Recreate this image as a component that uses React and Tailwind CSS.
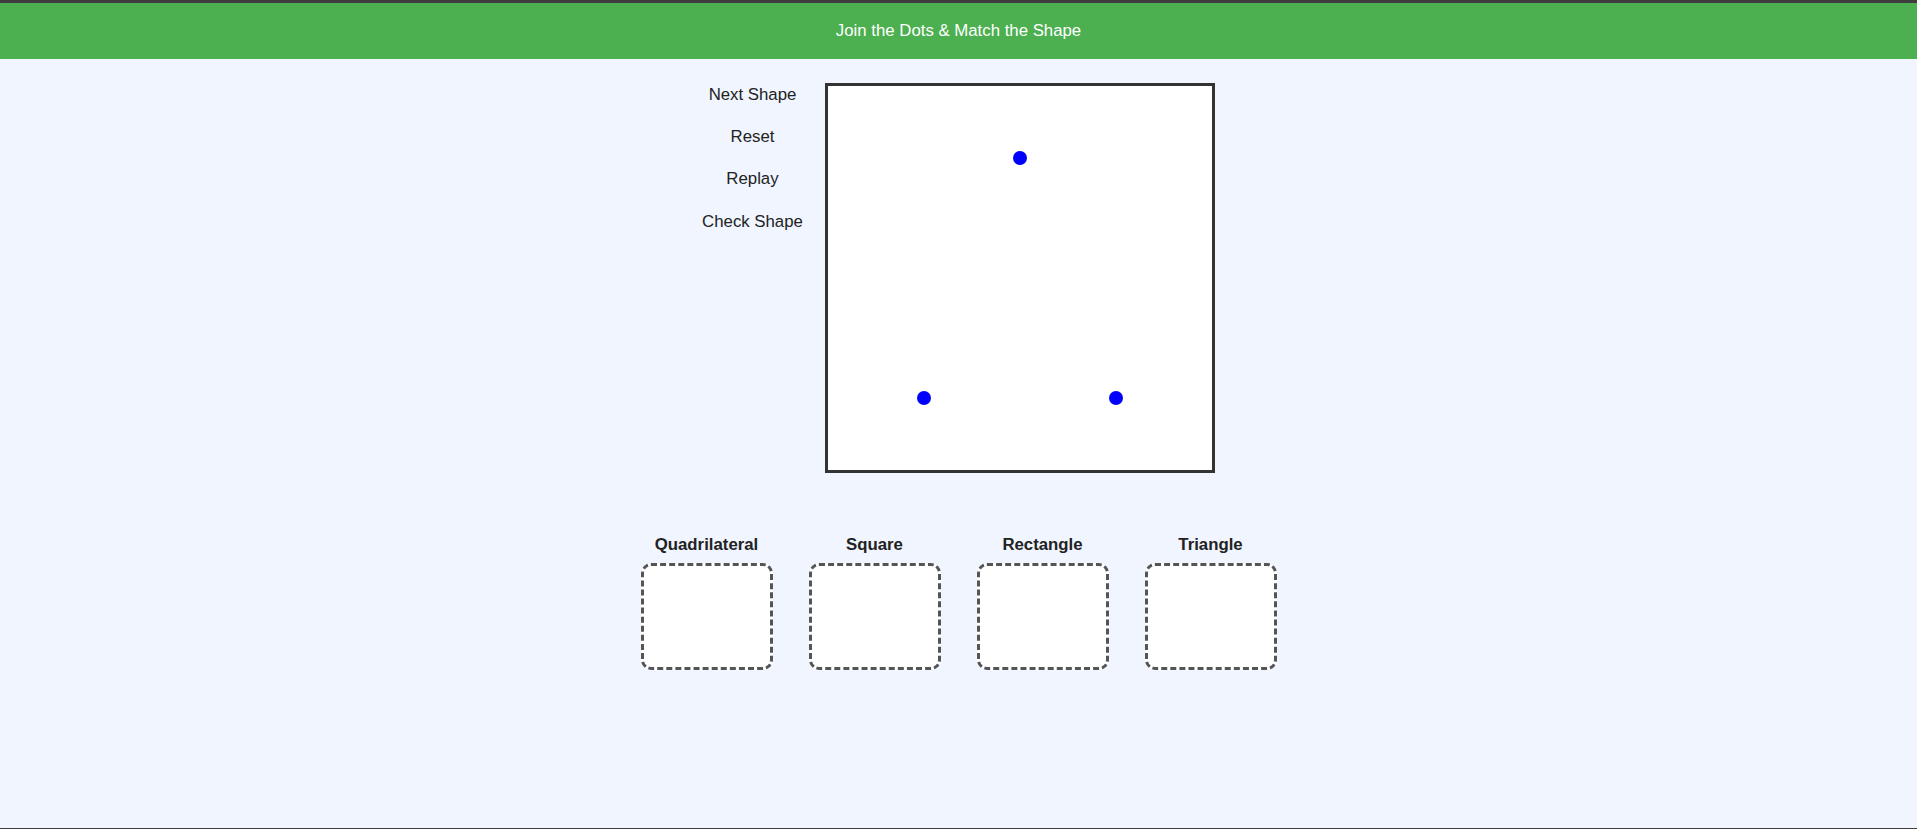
import React from 'react';

const DOTS = [
  { x: 192, y: 72 },
  { x: 96, y: 312 },
  { x: 288, y: 312 },
];

const SHAPES = ['Quadrilateral', 'Square', 'Rectangle', 'Triangle'];

const CONTROLS = ['Next Shape', 'Reset', 'Replay', 'Check Shape'];

function Board() {
  return (
    <div className="w-[390px] h-[390px] border-[3px] border-[#333] bg-white">
      <svg width="384" height="384" viewBox="0 0 384 384" className="block">
        {DOTS.map((d, i) => (
          <circle key={i} cx={d.x} cy={d.y} r="7" fill="#0000ff" />
        ))}
      </svg>
    </div>
  );
}

function DropZone({ label }) {
  return (
    <div className="flex flex-col items-center w-[132px]">
      <h3 className="text-[16.8px] leading-[18px] font-bold text-[#222] whitespace-nowrap">{label}</h3>
      <div className="mt-[9px] w-[132px] h-[107px] rounded-[10px] border-[3px] border-dashed border-[#555] bg-white" />
    </div>
  );
}

export default function App() {
  return (
    <div
      className="h-screen bg-[#f0f5ff] border-t-[3px] border-b border-[#3d3d3d] flex flex-col"
      style={{ fontFamily: '"Liberation Sans", Arial, sans-serif' }}
    >
      <header className="h-[56px] shrink-0 bg-[#4caf50] flex items-center justify-center">
        <h1 className="text-white text-[16.8px] font-normal">Join the Dots &amp; Match the Shape</h1>
      </header>

      <main className="flex flex-col items-center">
        <div className="flex items-start justify-center gap-[22px] mt-6">
          <div className="flex flex-col items-center gap-[24.2px] mt-[3px]">
            {CONTROLS.map((c) => (
              <button
                key={c}
                className="bg-transparent text-[16.8px] leading-[18px] text-[#222] whitespace-nowrap cursor-pointer"
              >
                {c}
              </button>
            ))}
          </div>
          <Board />
        </div>

        <div className="flex justify-center gap-[36px] mt-[63px]">
          {SHAPES.map((s) => (
            <DropZone key={s} label={s} />
          ))}
        </div>
      </main>
    </div>
  );
}
